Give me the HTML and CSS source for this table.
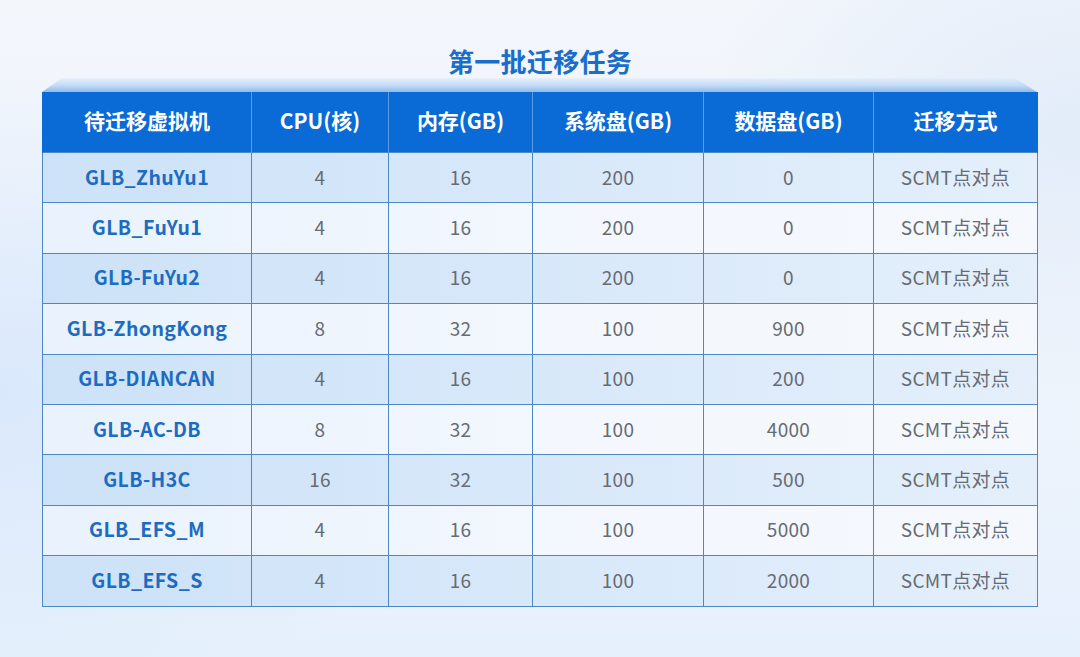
FILE: index.html
```html
<!DOCTYPE html>
<html lang="zh">
<head>
<meta charset="utf-8">
<link rel="stylesheet" href="styles.css">
</head>
<body>
<div class="page">
  <h1 class="title">第一批迁移任务</h1>
  <div class="board">
    <div class="lid"></div>
    <table class="grid">
      <colgroup>
        <col class="c1"><col class="c2"><col class="c3"><col class="c4"><col class="c5"><col class="c6">
      </colgroup>
      <thead>
        <tr><th>待迁移虚拟机</th><th>CPU(核)</th><th>内存(GB)</th><th>系统盘(GB)</th><th>数据盘(GB)</th><th>迁移方式</th></tr>
      </thead>
      <tbody>
        <tr><td class="name">GLB_ZhuYu1</td><td>4</td><td>16</td><td>200</td><td>0</td><td>SCMT点对点</td></tr>
        <tr><td class="name">GLB_FuYu1</td><td>4</td><td>16</td><td>200</td><td>0</td><td>SCMT点对点</td></tr>
        <tr><td class="name">GLB-FuYu2</td><td>4</td><td>16</td><td>200</td><td>0</td><td>SCMT点对点</td></tr>
        <tr><td class="name">GLB-ZhongKong</td><td>8</td><td>32</td><td>100</td><td>900</td><td>SCMT点对点</td></tr>
        <tr><td class="name">GLB-DIANCAN</td><td>4</td><td>16</td><td>100</td><td>200</td><td>SCMT点对点</td></tr>
        <tr><td class="name">GLB-AC-DB</td><td>8</td><td>32</td><td>100</td><td>4000</td><td>SCMT点对点</td></tr>
        <tr><td class="name">GLB-H3C</td><td>16</td><td>32</td><td>100</td><td>500</td><td>SCMT点对点</td></tr>
        <tr><td class="name">GLB_EFS_M</td><td>4</td><td>16</td><td>100</td><td>5000</td><td>SCMT点对点</td></tr>
        <tr><td class="name">GLB_EFS_S</td><td>4</td><td>16</td><td>100</td><td>2000</td><td>SCMT点对点</td></tr>
      </tbody>
    </table>
  </div>
</div>
</body>
</html>
```
FILE: styles.css
```css
* { box-sizing: border-box; }
html, body { margin: 0; padding: 0; }
body {
  width: 1080px;
  height: 657px;
  overflow: hidden;
  font-family: "Noto Sans CJK SC", "Noto Sans", sans-serif;
  background:
    radial-gradient(ellipse 60% 70% at 0% 60%, #d9e8fb 0%, rgba(217,232,251,0) 70%),
    radial-gradient(ellipse 50% 60% at 100% 20%, #e2ecf9 0%, rgba(226,236,249,0) 70%),
    linear-gradient(180deg, #f3f6fb 0%, #eef4fc 60%, #e6f0fc 100%);
}
.page {
  padding-top: 44px;
  display: flex;
  flex-direction: column;
  align-items: center;
}
.title {
  margin: 0;
  font-size: 26px;
  line-height: 34px;
  font-weight: 700;
  color: #1a6dc9;
  letter-spacing: 0.3px;
}
.board {
  width: 995px;
  margin-left: -1px;
}
.lid {
  height: 14px;
  background: linear-gradient(180deg, rgba(226,237,251,0.6) 0%, #c2daf5 55%, #8cbbec 100%);
  clip-path: polygon(20px 0, calc(100% - 22px) 0, 100% 100%, 0 100%);
}
.grid {
  width: 995px;
  border-collapse: collapse;
  table-layout: fixed;
}
.c1 { width: 209px; }
.c2 { width: 137px; }
.c3 { width: 144px; }
.c4 { width: 171px; }
.c5 { width: 170px; }
.c6 { width: 164px; }
.grid th {
  height: 60px;
  background: #0a6ad6;
  color: #ffffff;
  font-size: 21px;
  font-weight: 700;
  border-left: 1px solid #5d9be0;
  border-right: 1px solid #5d9be0;
  border-top: 1px solid #0a6ad6;
  text-align: center;
  padding: 0 0 5px;
}
.grid th:first-child { border-left-color: #0a6ad6; }
.grid th:last-child { border-right-color: #0a6ad6; }
.grid td {
  height: 50.4px;
  border: 1px solid #4a88c6;
  text-align: center;
  font-size: 19px;
  color: #676b73;
  padding: 0 0 3px;
  letter-spacing: 0.3px;
}
.grid tbody tr:nth-child(odd) {
  background: linear-gradient(90deg, #cde2f8 0%, #d9e9fa 55%, #e4effb 100%);
}
.grid tbody tr:nth-child(even) {
  background: linear-gradient(90deg, #e9f2fd 0%, #f4f8fe 55%, #f5f9fe 100%);
}
.grid td.name {
  color: #1d6cc0;
  font-weight: 700;
  font-size: 19.5px;
  letter-spacing: 0.4px;
}
```
